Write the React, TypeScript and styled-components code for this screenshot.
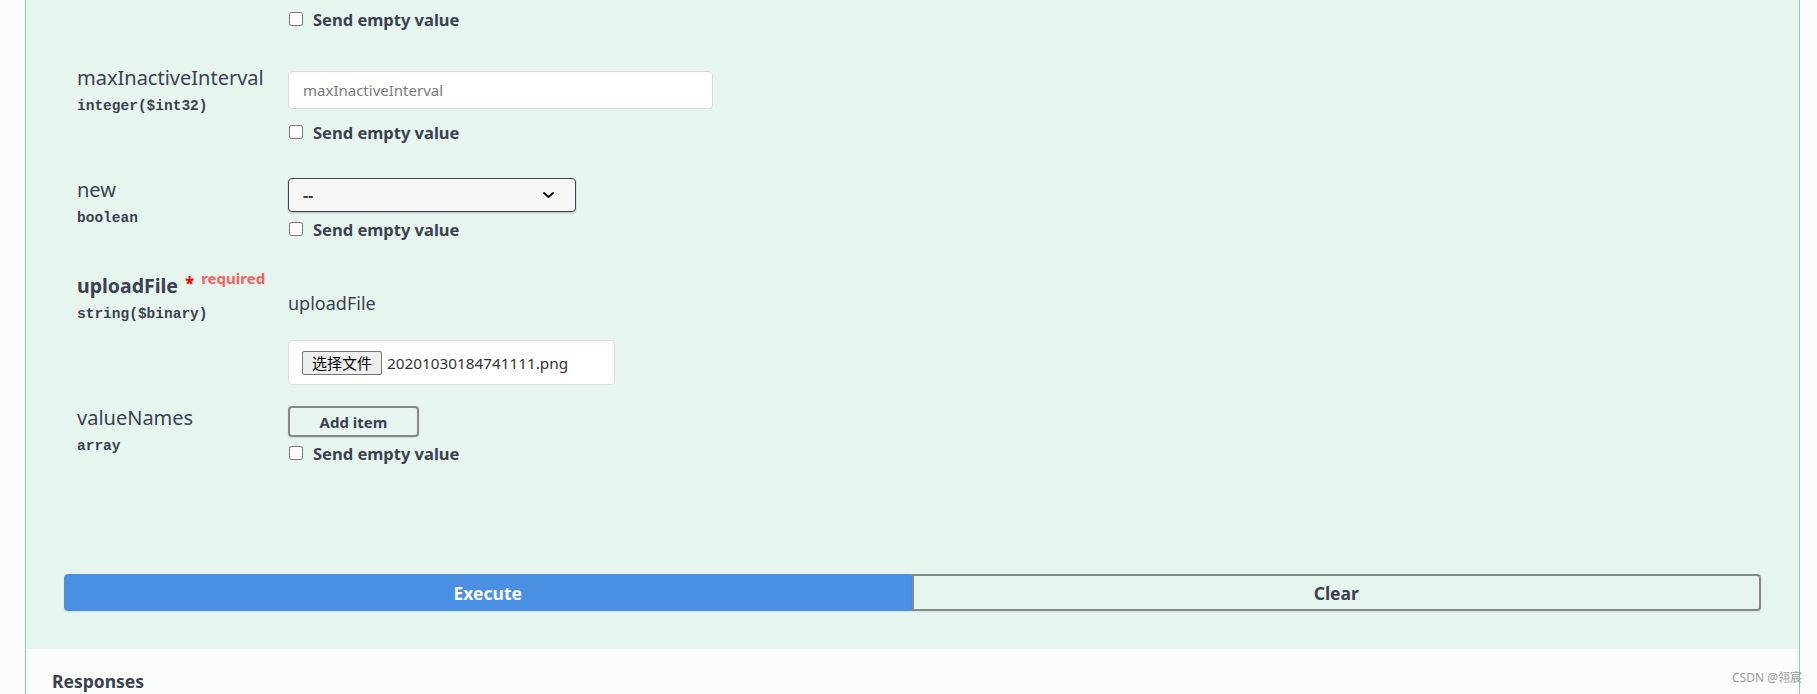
import React from "react";
import styled, { createGlobalStyle } from "styled-components";

const Global = createGlobalStyle`
  html, body { margin: 0; padding: 0; background: #fafafa; overflow: hidden; }
  #root { min-height: 100vh; }
  * { box-sizing: border-box; }
`;

const Page = styled.div`
  position: relative;
  min-height: 100vh;
  display: flex;
  padding: 0 17px 0 25px;
  font-family: "Noto Sans", sans-serif;
  color: #3b4151;
`;

const OpBlock = styled.div`
  flex: 1;
  display: flex;
  flex-direction: column;
  border-left: 1px solid #7dd4ab;
  border-right: 1px solid #7dd4ab;
  background: #e7f5ef;
`;

const ParamsSection = styled.div`
  padding: 0 38px 38px;
`;

const ParamList = styled.div`
  display: flex;
  flex-direction: column;
  padding-left: 13px;
`;

const ParamRow = styled.div<{ $gap: number }>`
  display: flex;
  align-items: flex-start;
  margin-top: ${(p) => p.$gap}px;
`;

const NameCell = styled.div`
  width: 211px;
  flex: none;
  display: flex;
  flex-direction: column;
`;

const ValueCell = styled.div<{ $shift?: number }>`
  display: flex;
  flex-direction: column;
  align-items: flex-start;
  padding-top: ${(p) => p.$shift ?? 0}px;
`;

const ParamName = styled.div<{ $required?: boolean }>`
  font-size: ${(p) => (p.$required ? "19.5px" : "20px")};
  font-weight: ${(p) => (p.$required ? 700 : 400)};
  line-height: 24px;
  height: 24px;
  white-space: nowrap;
`;

const Star = styled.span`
  color: #ff0000;
  font-size: 17px;
  font-weight: 700;
  line-height: 0;
  margin-left: 7px;
  vertical-align: 3px;
`;

const Required = styled.span`
  color: #f5625f;
  font-size: 15px;
  font-weight: 700;
  line-height: 0;
  margin-left: 7px;
  vertical-align: 9px;
`;

const ParamType = styled.div`
  margin-top: 7px;
  font-family: "Liberation Mono", monospace;
  font-weight: 700;
  font-size: 14.5px;
  line-height: 18px;
  color: #3b4151;
`;

const EmptyToggle = styled.label<{ $top: number }>`
  display: flex;
  align-items: center;
  gap: 10px;
  height: 20px;
  margin-top: ${(p) => p.$top}px;
  font-size: 16.5px;
  font-weight: 700;
  color: #3b4151;
  white-space: nowrap;
`;

const Checkbox = styled.input`
  width: 14px;
  height: 14px;
  margin: 0 0 0 1px;
`;

const TextInput = styled.input`
  width: 425px;
  height: 38px;
  border: 1px solid #d9d9d9;
  border-radius: 4px;
  background: #fff;
  padding: 0 14px;
  font-family: "Noto Sans", sans-serif;
  font-size: 15px;
  color: #3b4151;
  outline: none;
  &::placeholder {
    color: #7a7a7a;
  }
`;

const SelectBox = styled.div`
  width: 288px;
  height: 34px;
  display: flex;
  align-items: center;
  justify-content: space-between;
  padding: 0 20px 0 14px;
  border: 1px solid #41444e;
  border-radius: 4px;
  background: #f7f7f7;
  box-shadow: 0 1px 2px 0 rgba(0, 0, 0, 0.25);
  font-size: 16px;
  font-weight: 700;
  color: #3b4151;
`;

const FileTitle = styled.div`
  font-size: 18px;
  line-height: 24px;
  color: #3b4151;
`;

const FileBox = styled.div`
  width: 327px;
  height: 45px;
  margin-top: 25px;
  display: flex;
  align-items: center;
  padding-left: 13px;
  border: 1px solid #dedede;
  border-radius: 4px;
  background: #fff;
`;

const FileButton = styled.div`
  width: 80px;
  height: 24px;
  display: flex;
  align-items: center;
  justify-content: center;
  border: 1px solid #767676;
  border-radius: 2px;
  background: #efefef;
  font-family: "Noto Sans CJK SC", sans-serif;
  font-size: 15px;
  color: #000;
`;

const FileName = styled.span`
  margin-left: 5px;
  font-size: 15.3px;
  color: #333;
`;

const AddButton = styled.button`
  width: 131px;
  height: 31px;
  border: 2px solid #888;
  border-radius: 4px;
  background: transparent;
  box-shadow: 0 1px 2px rgba(0, 0, 0, 0.1);
  font-family: "Noto Sans", sans-serif;
  font-size: 15px;
  font-weight: 700;
  color: #3b4151;
  padding: 0;
`;

const ButtonGroup = styled.div`
  display: flex;
  margin-top: 111px;
`;

const ActionButton = styled.button<{ $primary?: boolean }>`
  flex: 1;
  height: 37px;
  padding: 0;
  font-family: "Noto Sans", sans-serif;
  font-size: 17.5px;
  font-weight: 700;
  color: ${(p) => (p.$primary ? "#fff" : "#3b4151")};
  background: ${(p) => (p.$primary ? "#4990e2" : "transparent")};
  border: ${(p) => (p.$primary ? "1px solid #4990e2" : "2px solid #888")};
  border-radius: ${(p) => (p.$primary ? "4px 0 0 4px" : "0 4px 4px 0")};
  box-shadow: 0 1px 2px rgba(0, 0, 0, 0.1);
`;

const ResponsesHeader = styled.div`
  flex: 1;
  background: #fafdfc;
  padding: 20px 26px 0;
  font-size: 17.5px;
  font-weight: 700;
  line-height: 24px;
  color: #3b4151;
`;

const Watermark = styled.div`
  position: absolute;
  right: 15px;
  bottom: 8px;
  font-family: "Noto Sans", "Noto Sans CJK SC", sans-serif;
  font-size: 12px;
  line-height: 16px;
  color: #9a9a9a;
`;

const Chevron = () => (
  <svg width="13" height="8" viewBox="0 0 13 8" fill="none">
    <path d="M2 2 L6.5 6 L11 2" stroke="#000" strokeWidth="1.8" strokeLinecap="round" strokeLinejoin="round" />
  </svg>
);

const Toggle = ({ top }: { top: number }) => (
  <EmptyToggle $top={top}>
    <Checkbox type="checkbox" />
    Send empty value
  </EmptyToggle>
);

export default function App() {
  return (
    <>
      <Global />
      <Page>
        <OpBlock>
          <ParamsSection>
            <ParamList>
              <ParamRow $gap={9}>
                <NameCell />
                <ValueCell>
                  <Toggle top={0} />
                </ValueCell>
              </ParamRow>

              <ParamRow $gap={37}>
                <NameCell>
                  <ParamName>maxInactiveInterval</ParamName>
                  <ParamType>integer($int32)</ParamType>
                </NameCell>
                <ValueCell $shift={5}>
                  <TextInput placeholder="maxInactiveInterval" />
                  <Toggle top={13} />
                </ValueCell>
              </ParamRow>

              <ParamRow $gap={36}>
                <NameCell>
                  <ParamName>new</ParamName>
                  <ParamType>boolean</ParamType>
                </NameCell>
                <ValueCell>
                  <SelectBox>
                    <span>--</span>
                    <Chevron />
                  </SelectBox>
                  <Toggle top={7} />
                </ValueCell>
              </ParamRow>

              <ParamRow $gap={35}>
                <NameCell>
                  <ParamName $required>
                    uploadFile
                    <Star>*</Star>
                    <Required>required</Required>
                  </ParamName>
                  <ParamType>string($binary)</ParamType>
                </NameCell>
                <ValueCell $shift={17}>
                  <FileTitle>uploadFile</FileTitle>
                  <FileBox>
                    <FileButton>选择文件</FileButton>
                    <FileName>20201030184741111.png</FileName>
                  </FileBox>
                </ValueCell>
              </ParamRow>

              <ParamRow $gap={21}>
                <NameCell>
                  <ParamName>valueNames</ParamName>
                  <ParamType>array</ParamType>
                </NameCell>
                <ValueCell>
                  <AddButton>Add item</AddButton>
                  <Toggle top={6} />
                </ValueCell>
              </ParamRow>
            </ParamList>

            <ButtonGroup>
              <ActionButton $primary>Execute</ActionButton>
              <ActionButton>Clear</ActionButton>
            </ButtonGroup>
          </ParamsSection>
          <ResponsesHeader>Responses</ResponsesHeader>
        </OpBlock>
        <Watermark>CSDN @翎宸</Watermark>
      </Page>
    </>
  );
}
